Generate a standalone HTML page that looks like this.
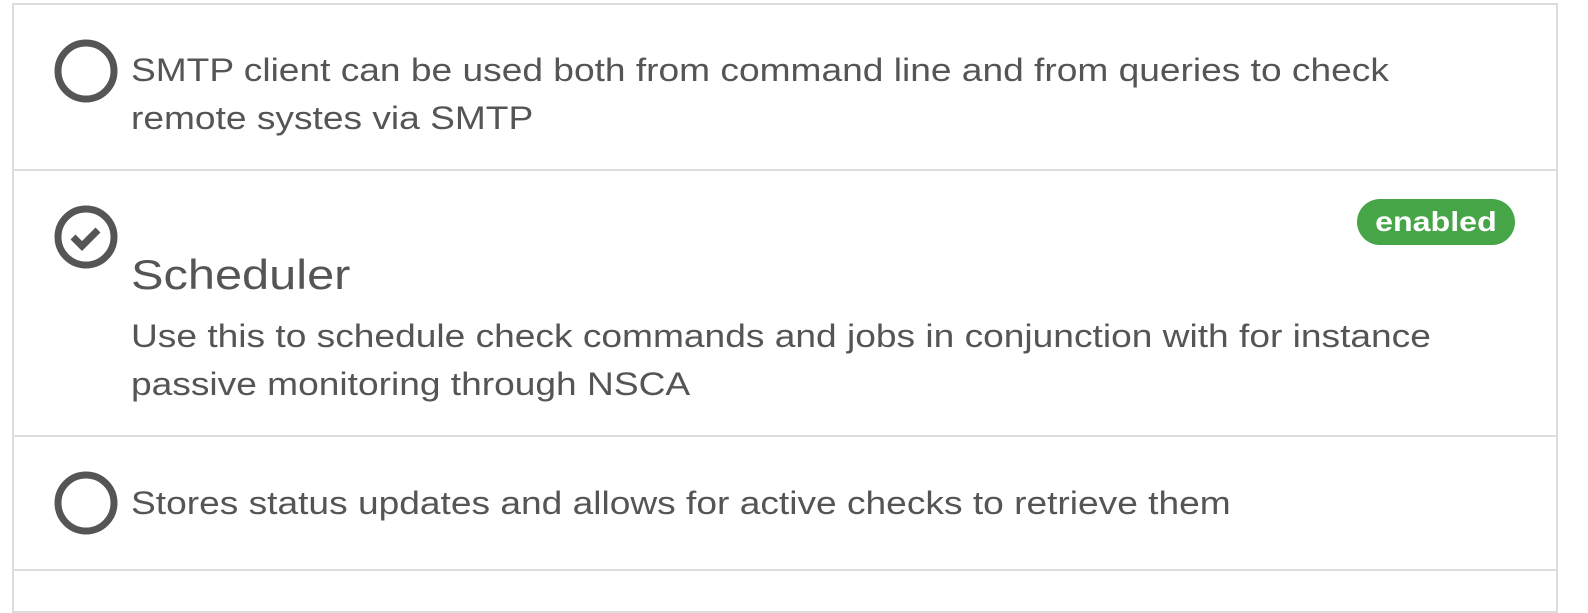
<html><head><style>
body{margin:0;width:1588px;height:592px;background:#fff;font-family:"Liberation Sans",sans-serif;color:#555;position:relative;overflow:hidden}
.box{position:absolute;left:12px;width:1542px;border:2px solid #ddd;border-right-width:2px}
.t{position:absolute;left:131px;font-size:32px;line-height:48px;white-space:nowrap;transform:scaleX(1.16);transform-origin:0 0}
svg{position:absolute}
</style></head><body>
<div class="box" style="top:3px;height:165px;border-bottom:none"></div>
<div class="box" style="top:169px;height:265px;border-bottom:none"></div>
<div class="box" style="top:435px;height:133px;border-bottom:none"></div>
<div class="box" style="top:569px;height:40px"></div>
<svg style="left:53px;top:38px" width="66" height="66"><circle cx="33" cy="33" r="28" fill="none" stroke="#555" stroke-width="7"/></svg>
<div class="t" style="top:46px">SMTP client can be used both from command line and from queries to check<br>remote systes via SMTP</div>
<svg style="left:53px;top:204px" width="66" height="66"><circle cx="33" cy="33" r="28" fill="none" stroke="#555" stroke-width="7"/><path d="M20 33 L29 42 L45 26" fill="none" stroke="#555" stroke-width="7"/></svg>
<div class="t" style="top:248px;font-size:42px;line-height:54px">Scheduler</div>
<div class="t" style="top:312px">Use this to schedule check commands and jobs in conjunction with for instance<br>passive monitoring through NSCA</div>
<div style="position:absolute;left:1357px;top:199px;width:158px;height:46px;border-radius:23px;background:#46a546;color:#fff;font-weight:bold;font-size:28px;line-height:46px;text-align:center"><span style="display:inline-block;transform:scaleX(1.15)">enabled</span></div>
<svg style="left:53px;top:470px" width="66" height="66"><circle cx="33" cy="33" r="28" fill="none" stroke="#555" stroke-width="7"/></svg>
<div class="t" style="top:479px">Stores status updates and allows for active checks to retrieve them</div>
</body></html>
